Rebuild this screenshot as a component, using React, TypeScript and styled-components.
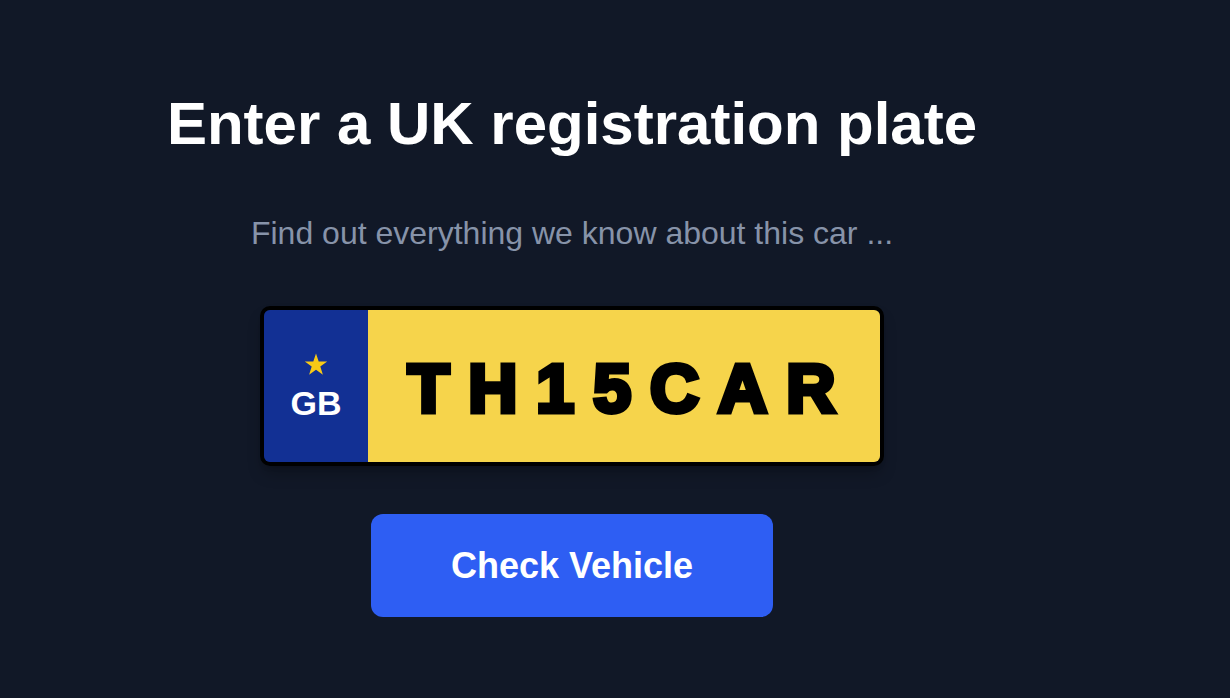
import React from 'react'
import styled, { createGlobalStyle } from 'styled-components'

const GlobalStyle = createGlobalStyle`
  html, body {
    margin: 0;
    padding: 0;
    background: #111827;
  }
  body {
    font-family: "Liberation Sans", Arial, sans-serif;
  }
`

const Page = styled.main`
  min-height: 698px;
  box-sizing: border-box;
  padding: 88px 86px 0 0;
  display: flex;
  flex-direction: column;
  align-items: center;
  background: #111827;
`

const Title = styled.h1`
  margin: 0;
  font-size: 60px;
  line-height: 72px;
  font-weight: 700;
  color: #ffffff;
`

const Subtitle = styled.p`
  margin: 54px 0 0;
  font-size: 32px;
  line-height: 38px;
  color: #8793a9;
`

const Plate = styled.div`
  margin-top: 54px;
  width: 624px;
  height: 160px;
  box-sizing: border-box;
  border: 4px solid #000;
  border-radius: 10px;
  overflow: hidden;
  display: flex;
  box-shadow: 0 10px 15px -3px rgba(0, 0, 0, 0.25), 0 4px 6px -4px rgba(0, 0, 0, 0.2);
`

const Band = styled.div`
  width: 104px;
  background: #123094;
  display: flex;
  flex-direction: column;
  align-items: center;
  justify-content: center;
  gap: 10px;
`

const Country = styled.span`
  font-size: 34px;
  line-height: 34px;
  font-weight: 700;
  color: #ffffff;
`

const Face = styled.div`
  flex: 1;
  background: #f6d44b;
  display: flex;
  align-items: center;
  justify-content: center;
  padding: 4px 0 0 14px;
`

// heavy plate lettering: bold face thickened with a stroke
const Registration = styled.span`
  font-size: 68px;
  line-height: 68px;
  font-weight: 700;
  letter-spacing: 19px;
  color: #000;
  -webkit-text-stroke: 5px #000;
`

const CheckButton = styled.button`
  margin-top: 48px;
  width: 402px;
  height: 103px;
  border: none;
  border-radius: 12px;
  background: #2e5ef3;
  color: #fff;
  font-family: "Liberation Sans", Arial, sans-serif;
  font-size: 36px;
  font-weight: 700;
  cursor: pointer;
`

const Star = () => (
  <svg width="24" height="23" viewBox="0 0 24 23" aria-hidden="true">
    <path
      d="M12 0.5l2.7 8.1h8.5l-6.9 5 2.6 8.2L12 16.8l-6.9 5 2.6-8.2-6.9-5h8.5z"
      fill="#f8c916"
    />
  </svg>
)

export default function App() {
  return (
    <>
      <GlobalStyle />
      <Page>
        <Title>Enter a UK registration plate</Title>
        <Subtitle>Find out everything we know about this car ...</Subtitle>
        <Plate>
          <Band>
            <Star />
            <Country>GB</Country>
          </Band>
          <Face>
            <Registration>TH15CAR</Registration>
          </Face>
        </Plate>
        <CheckButton>Check Vehicle</CheckButton>
      </Page>
    </>
  )
}
